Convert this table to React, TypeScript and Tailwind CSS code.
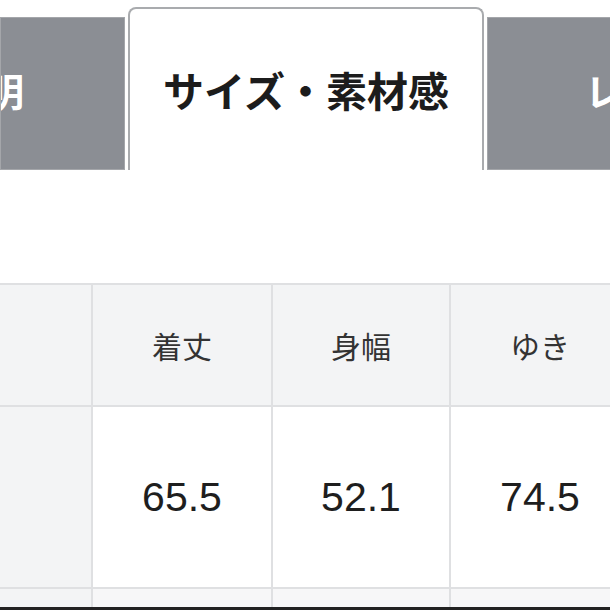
import React from "react";

const jp = "font-['Noto_Sans_CJK_JP','Noto_Sans',sans-serif]";
const num = "font-['Liberation_Sans',Arial,sans-serif]";

const headers = ["着丈", "身幅", "ゆき"];
const values = ["65.5", "52.1", "74.5"];

const App = () => {
  return (
    <div className={`w-[610px] h-[610px] overflow-hidden bg-white flex flex-col ${jp}`}>
      {/* tabs */}
      <div className="flex items-end h-[170px] pt-[7px] shrink-0">
        <div className="w-[125px] h-[153px] shrink-0 bg-[#8b8e94] border border-[#a4a6aa] flex items-center justify-end overflow-hidden pr-[100px] pb-[8px]">
          <span className="text-[38px] font-bold text-white whitespace-nowrap leading-none">商品説明</span>
        </div>
        <div className="ml-[3px] w-[356px] h-[163px] shrink-0 bg-white border-2 border-b-0 border-[#a9abae] rounded-t-[8px] flex items-center justify-center">
          <span className="text-[41px] font-bold text-[#1c1c1c] whitespace-nowrap leading-none">サイズ・素材感</span>
        </div>
        <div className="ml-[3px] w-[200px] h-[153px] shrink-0 bg-[#8b8e94] border border-[#a4a6aa] flex items-center overflow-hidden pl-[97px] pb-[8px]">
          <span className="text-[38px] font-bold text-white whitespace-nowrap leading-none">レビュー</span>
        </div>
      </div>

      {/* table */}
      <div className="mt-[113px] bg-[#dfe0e2] pt-[2px] grid grid-cols-[91px_178px_176px_178px] grid-rows-[120px_180px_18px] gap-[2px] shrink-0">
        <div className="bg-[#f3f4f5]" />
        {headers.map((h) => (
          <div key={h} className="bg-[#f3f4f5] flex items-center justify-center pb-[1px]">
            <span className="text-[30px] text-[#333] leading-none">{h}</span>
          </div>
        ))}
        <div className="bg-[#f3f4f5]" />
        {values.map((v) => (
          <div key={v} className="bg-white flex items-center justify-center">
            <span className={`${num} text-[41px] text-[#1e1e1e] leading-none`}>{v}</span>
          </div>
        ))}
        <div className="bg-[#f3f4f5]" />
        <div className="bg-[#f7f7f8]" />
        <div className="bg-[#f7f7f8]" />
        <div className="bg-[#f7f7f8]" />
      </div>
      <div className="h-[4px] bg-[#222] shrink-0" />
    </div>
  );
};

export default App;
